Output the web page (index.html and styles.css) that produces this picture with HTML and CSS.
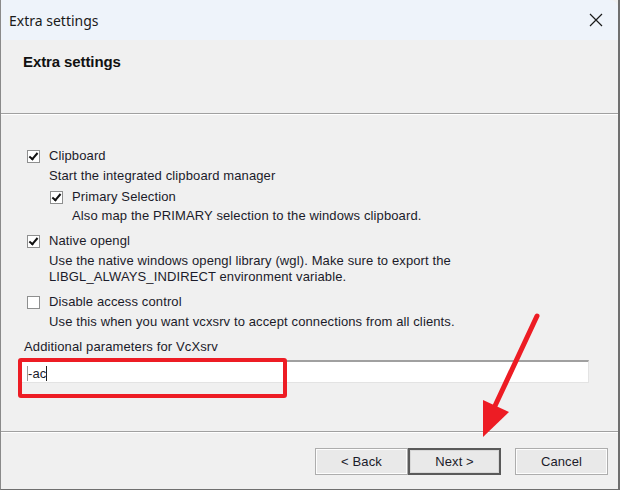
FILE: index.html
```html
<!DOCTYPE html>
<html>
<head>
<meta charset="utf-8">
<link rel="stylesheet" href="styles.css">
</head>
<body>
<div class="window">
  <div class="titlebar">
    <span class="title">Extra settings</span>
    <svg class="close" width="14" height="14" viewBox="0 0 14 14"><path d="M1 1 L13 13 M13 1 L1 13" stroke="#1a1a1a" stroke-width="1.2" fill="none"/></svg>
  </div>
  <div class="header">
    <div class="heading">Extra settings</div>
  </div>
  <div class="content">
    <div class="group">
      <div class="opt"><span class="cb checked"></span><span>Clipboard</span></div>
      <div class="desc">Start the integrated clipboard manager</div>
      <div class="sub">
        <div class="opt"><span class="cb checked"></span><span>Primary Selection</span></div>
        <div class="desc sdesc">Also map the PRIMARY selection to the windows clipboard.</div>
      </div>
    </div>
    <div class="group">
      <div class="opt"><span class="cb checked"></span><span>Native opengl</span></div>
      <div class="desc">Use the native windows opengl library (wgl). Make sure to export the<br>LIBGL_ALWAYS_INDIRECT environment variable.</div>
    </div>
    <div class="group">
      <div class="opt"><span class="cb"></span><span>Disable access control</span></div>
      <div class="desc">Use this when you want vcxsrv to accept connections from all clients.</div>
    </div>
    <div class="group params">
      <div class="plabel">Additional parameters for VcXsrv</div>
      <div class="input"><span class="caret"></span>-ac<span class="caret"></span></div>
    </div>
  </div>
  <div class="footer">
    <div class="btn">&lt; Back</div>
    <div class="btn default">Next &gt;</div>
    <div class="btn cancel">Cancel</div>
  </div>
  <div class="highlight"></div>
  <svg class="arrow" width="620" height="490" viewBox="0 0 620 490">
    <line x1="537" y1="316" x2="494" y2="408" stroke="#ed1c24" stroke-width="5" stroke-linecap="round"/>
    <polygon points="483,400 509,412 483,437" fill="#ed1c24"/>
  </svg>
</div>
</body>
</html>
```
FILE: styles.css
```css
* { box-sizing: border-box; }
html, body { margin: 0; padding: 0; }
body {
  width: 620px;
  height: 490px;
  background: #f0f0f0;
  font-family: "Liberation Sans", Arial, sans-serif;
  font-size: 13px;
  letter-spacing: 0.12px;
  color: #1b1b2a;
  overflow: hidden;
}
.window {
  position: relative;
  width: 620px;
  height: 490px;
  background: #f0f0f0;
  border-left: 1px solid #8a8a8a;
  border-right: 2px solid #6f6f6f;
  border-bottom: 1px solid #6f6f6f;
  display: flex;
  flex-direction: column;
}
.titlebar {
  height: 40px;
  background: #eef3fa;
  display: flex;
  align-items: center;
  justify-content: space-between;
  padding: 0 15px 0 8px;
  border-top-right-radius: 8px;
}
.title {
  font-family: "Noto Sans", "Open Sans", sans-serif;
  font-size: 14px;
  letter-spacing: 0;
  color: #1a1a1a;
}
.close { display: block; }
.header {
  height: 74px;
  border-bottom: 1px solid #a0a0a0;
  box-shadow: 0 1px 0 #ffffff;
  padding: 13px 0 0 22px;
}
.heading {
  font-weight: bold;
  font-size: 15px;
  letter-spacing: -0.1px;
  line-height: 18px;
  color: #111;
}
.content {
  flex: 1;
  padding: 34px 0 0 26px;
}
.group + .group { margin-top: 9px; }
.opt {
  display: flex;
  align-items: center;
  gap: 9px;
  height: 16px;
  line-height: 16px;
}
.cb {
  width: 13px;
  height: 13px;
  background: #fff;
  border: 1px solid #8e8f8f;
  position: relative;
  flex: none;
}
.cb.checked::after {
  content: "";
  position: absolute;
  left: 3px;
  top: 0px;
  width: 3px;
  height: 7px;
  border: solid #111;
  border-width: 0 2px 2px 0;
  transform: rotate(40deg);
}
.desc {
  margin-top: 4px;
  margin-left: 22px;
  line-height: 16px;
}
.sub {
  margin-top: 5px;
  margin-left: 23px;
}
.sdesc { margin-top: 3px; }
.params { margin-left: -7px; margin-right: 29px; }
.plabel {
  line-height: 16px;
  margin-left: 4px;
}
.input {
  margin-top: 5px;
  height: 23px;
  background: #fff;
  border-top: 2px solid #a0a0a0;
  border-left: 1px solid #c8c8c8;
  border-right: 1px solid #e3e3e3;
  border-bottom: 1px solid #e3e3e3;
  padding: 2px 0 0 6px;
  line-height: 17px;
  display: flex;
  align-items: center;
}
.caret {
  display: inline-block;
  width: 1px;
  height: 15px;
  background: #222;
}
.caret:first-child { background: #999; margin-right: 0; }
.footer {
  height: 58px;
  border-top: 1px solid #a0a0a0;
  box-shadow: inset 0 1px 0 #ffffff;
  display: flex;
  justify-content: flex-end;
  align-items: flex-start;
  padding: 16px 10px 0 0;
}
.btn {
  width: 93px;
  height: 27px;
  background: #e9e9e9;
  border: 1px solid #adadad;
  box-shadow: inset 0 0 0 1px #fdfdfd;
  display: flex;
  align-items: center;
  justify-content: center;
  color: #1b1b2a;
}
.btn.default {
  border: 2px solid #5a5a5a;
  box-shadow: inset 0 0 0 1px #d8d8d8;
}
.btn.cancel { margin-left: 14px; }
.highlight {
  position: absolute;
  left: 17px;
  top: 358px;
  width: 269px;
  height: 40px;
  border: 4px solid #ed1c24;
  border-radius: 3px;
}
.arrow {
  position: absolute;
  left: -1px;
  top: 0;
  pointer-events: none;
}
```
